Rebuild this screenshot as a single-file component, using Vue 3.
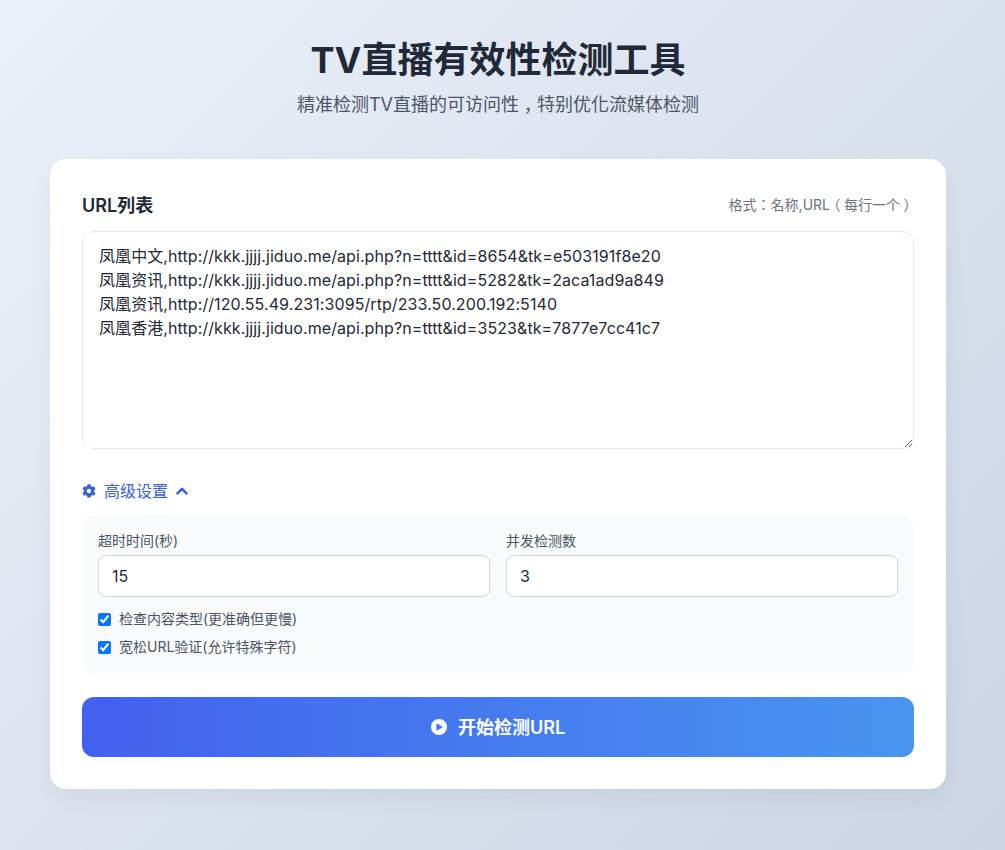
<script setup>
import { ref } from 'vue'
const urls = ref(`凤凰中文,http://kkk.jjjj.jiduo.me/api.php?n=tttt&id=8654&tk=e503191f8e20
凤凰资讯,http://kkk.jjjj.jiduo.me/api.php?n=tttt&id=5282&tk=2aca1ad9a849
凤凰资讯,http://120.55.49.231:3095/rtp/233.50.200.192:5140
凤凰香港,http://kkk.jjjj.jiduo.me/api.php?n=tttt&id=3523&tk=7877e7cc41c7`)
const timeout = ref(15)
const concurrency = ref(3)
const checkType = ref(true)
const loose = ref(true)
</script>

<template>
  <div class="page">
    <div class="wrap">
      <header class="head">
        <h1>TV直播有效性检测工具</h1>
        <p>精准检测TV直播的可访问性<span class="low">，</span>特别优化流媒体检测</p>
      </header>
      <main class="card">
        <div class="list-head">
          <label class="list-label">URL列表</label>
          <span class="hint">格式：名称,URL<span class="paren">（</span>每行一个<span class="paren">）</span></span>
        </div>
        <textarea v-model="urls" class="urls" spellcheck="false"></textarea>
        <button class="toggle" type="button">
          <svg class="gear" viewBox="0 0 512 512" aria-hidden="true"><path fill="currentColor" d="M487.4 315.7l-42.6-24.6c4.3-23.2 4.3-47 0-70.2l42.6-24.6c4.9-2.8 7.1-8.6 5.5-14-11.1-35.6-30-67.8-54.7-94.6-3.8-4.1-10-5.1-14.8-2.3L380.8 110c-17.9-15.4-38.5-27.3-60.8-35.1V25.8c0-5.6-3.9-10.5-9.4-11.7-36.7-8.2-74.3-7.8-109.2 0-5.5 1.2-9.4 6.1-9.4 11.7V75c-22.2 7.9-42.8 19.8-60.8 35.1L88.7 85.5c-4.9-2.8-11-1.9-14.8 2.3-24.7 26.7-43.6 58.9-54.7 94.6-1.7 5.4.6 11.2 5.5 14L67.3 221c-4.3 23.2-4.3 47 0 70.2l-42.6 24.6c-4.9 2.8-7.1 8.6-5.5 14 11.1 35.6 30 67.8 54.7 94.6 3.8 4.1 10 5.1 14.8 2.3l42.6-24.6c17.9 15.4 38.5 27.3 60.8 35.1v49.2c0 5.6 3.9 10.5 9.4 11.7 36.7 8.2 74.3 7.8 109.2 0 5.5-1.2 9.4-6.1 9.4-11.7v-49.2c22.2-7.9 42.8-19.8 60.8-35.1l42.6 24.6c4.9 2.8 11 1.9 14.8-2.3 24.7-26.7 43.6-58.9 54.7-94.6 1.5-5.5-.7-11.3-5.6-14.1zM256 336c-44.1 0-80-35.9-80-80s35.9-80 80-80 80 35.9 80 80-35.9 80-80 80z"/></svg>
          <span>高级设置</span>
          <svg class="chev" viewBox="0 0 12 8" aria-hidden="true"><path d="M1.5 6.3 6 1.8l4.5 4.5" fill="none" stroke="currentColor" stroke-width="2.6" stroke-linecap="round" stroke-linejoin="round"/></svg>
        </button>
        <section class="settings">
          <div class="fields">
            <div class="field">
              <label>超时时间(秒)</label>
              <input v-model="timeout" type="text" />
            </div>
            <div class="field">
              <label>并发检测数</label>
              <input v-model="concurrency" type="text" />
            </div>
          </div>
          <label class="check"><input v-model="checkType" type="checkbox" /><span>检查内容类型(更准确但更慢)</span></label>
          <label class="check"><input v-model="loose" type="checkbox" /><span>宽松URL验证(允许特殊字符)</span></label>
        </section>
        <button class="start" type="button">
          <svg class="play" viewBox="0 0 16 16" aria-hidden="true"><path fill="currentColor" fill-rule="evenodd" d="M8 0a8 8 0 1 1 0 16A8 8 0 0 1 8 0zM6.2 4.6c-.4-.2-.8 0-.8.5v5.8c0 .5.4.7.8.5l5-2.9c.4-.2.4-.8 0-1z"/></svg>
          <span>开始检测URL</span>
        </button>
      </main>
    </div>
  </div>
</template>

<style>
html, body { margin: 0; padding: 0; }
</style>

<style scoped>
* { box-sizing: border-box; }
.page {
  height: 850px;
  overflow: hidden;
  padding: 32px 0 0 50px;
  background: linear-gradient(135deg, #ebf0f8 0%, #cbd5e5 100%);
  font-family: Inter, "Noto Sans CJK TC", sans-serif;
  color: #1f2937;
}
.wrap { width: 896px; }
.head { text-align: center; margin-bottom: 40px; }
.head h1 { margin: 0 0 3px; font-size: 36px; line-height: 56px; font-weight: 700; color: #1f2937; }
.head p { margin: 0; font-size: 18px; line-height: 28px; color: #4b5563; }
.low { line-height: 0; vertical-align: -6px; }
.card {
  background: #fff;
  border-radius: 16px;
  padding: 32px;
  box-shadow: 0 10px 25px rgba(0, 0, 0, 0.05);
}
.list-head { display: flex; justify-content: space-between; align-items: center; height: 28px; margin-bottom: 12px; }
.list-label { font-size: 18px; font-weight: 600; color: #1f2937; margin-bottom: 2px; }
.hint { font-size: 14px; color: #6b7280; margin-bottom: 2px; }
.paren { font-feature-settings: "halt"; margin: 0 3.5px; }
.urls {
  display: block;
  width: 100%;
  height: 218px;
  padding: 12px 16px;
  border: 1px solid #e5e7eb;
  border-radius: 12px;
  outline: none;
  font: inherit;
  font-size: 16px;
  line-height: 24px;
  color: #1f2937;
  letter-spacing: 0.085px;
}
.toggle {
  display: flex;
  align-items: center;
  gap: 8px;
  margin-top: 29px;
  padding: 0;
  height: 24px;
  background: none;
  border: 0;
  font: inherit;
  font-size: 16px;
  color: #3a62d0;
}
.gear { width: 14px; height: 14px; margin-top: 2px; }
.chev { width: 12px; height: 8px; margin-top: 1px; }
.settings {
  margin-top: 13px;
  padding: 16px 16px 17px;
  border-radius: 12px;
  background: #f8fafc;
}
.fields { display: grid; grid-template-columns: 1fr 1fr; gap: 16px; margin-bottom: 11px; }
.field label { display: block; font-size: 14px; line-height: 20px; color: #4b5563; margin-bottom: 4px; }
.field input {
  display: block;
  width: 100%;
  height: 42px;
  padding: 0 13px;
  border: 1px solid #d1d5db;
  border-radius: 8px;
  outline: none;
  font: inherit;
  font-size: 16px;
  color: #1f2937;
  background: #fff;
}
.check { display: flex; align-items: center; height: 20px; font-size: 14px; color: #4b5563; }
.check + .check { margin-top: 8px; }
.check input { width: 13px; height: 13px; margin: 2px 8px 0 0; }
.start {
  display: flex;
  align-items: center;
  justify-content: center;
  gap: 11px;
  width: 100%;
  height: 60px;
  margin-top: 24px;
  padding: 0 0 2px;
  border: 0;
  border-radius: 12px;
  background: linear-gradient(90deg, #4361ee 0%, #4895ef 100%);
  color: #fff;
  font: inherit;
  font-size: 18px;
  font-weight: 600;
}
.play { width: 16px; height: 16px; margin-top: 2px; }
</style>
